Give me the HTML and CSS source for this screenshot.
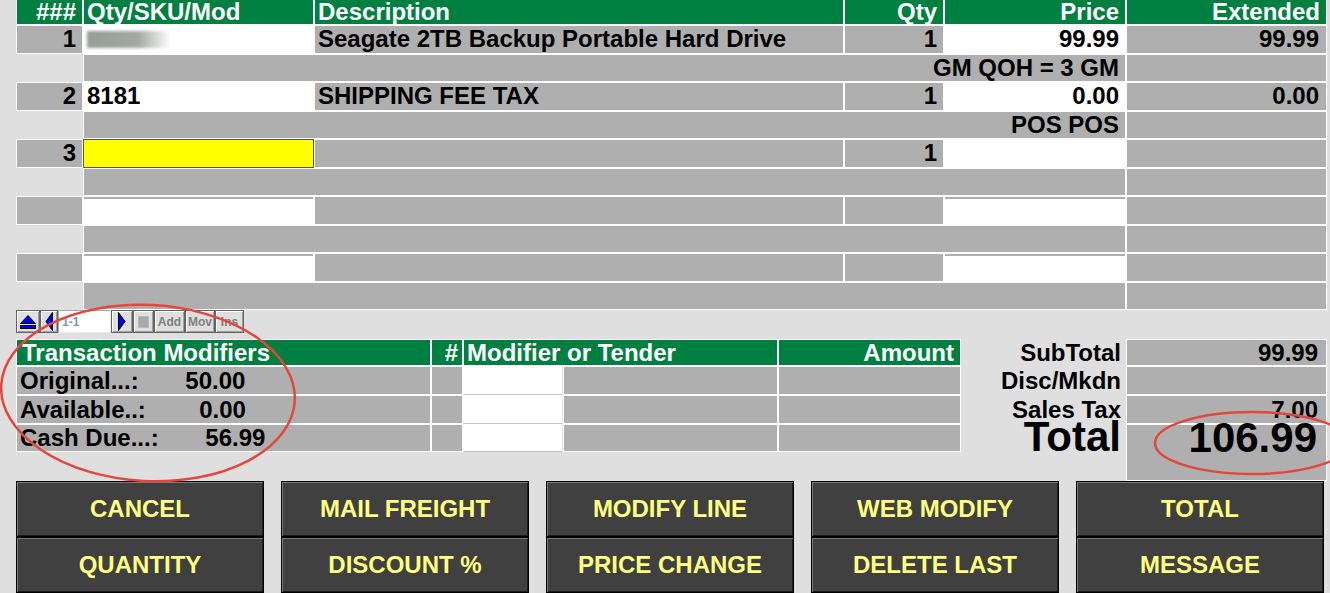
FILE: index.html
```html
<!DOCTYPE html>
<html>
<head>
<meta charset="utf-8">
<title>POS Entry</title>
<link rel="stylesheet" href="styles.css">
</head>
<body>
<div class="screen">
  <div class="lines">
    <div class="c hd r">###</div>
    <div class="c hd">Qty/SKU/Mod</div>
    <div class="c hd">Description</div>
    <div class="c hd r">Qty</div>
    <div class="c hd r">Price</div>
    <div class="c hd r">Extended</div>

    <div class="c r">1</div>
    <div class="c w"><span class="blur"></span></div>
    <div class="c">Seagate 2TB Backup Portable Hard Drive</div>
    <div class="c r">1</div>
    <div class="c w r">99.99</div>
    <div class="c r ext">99.99</div>

    <div class="blank"></div>
    <div class="c r span4">GM QOH = 3 GM</div>
    <div class="c"></div>

    <div class="c r">2</div>
    <div class="c w">8181</div>
    <div class="c">SHIPPING FEE TAX</div>
    <div class="c r">1</div>
    <div class="c w r">0.00</div>
    <div class="c r ext">0.00</div>

    <div class="blank"></div>
    <div class="c r span4">POS POS</div>
    <div class="c"></div>

    <div class="c r">3</div>
    <div class="c y"></div>
    <div class="c"></div>
    <div class="c r">1</div>
    <div class="c w"></div>
    <div class="c"></div>

    <div class="blank"></div>
    <div class="c span4"></div>
    <div class="c"></div>

    <div class="c"></div>
    <div class="c w wt"></div>
    <div class="c"></div>
    <div class="c"></div>
    <div class="c w wt"></div>
    <div class="c"></div>

    <div class="blank"></div>
    <div class="c span4"></div>
    <div class="c"></div>

    <div class="c"></div>
    <div class="c w wt"></div>
    <div class="c"></div>
    <div class="c"></div>
    <div class="c w wt"></div>
    <div class="c"></div>

    <div class="blank"></div>
    <div class="c span4"></div>
    <div class="c"></div>
  </div>

  <div class="toolbar">
    <div class="tb tb-eject">
      <svg width="18" height="16" viewBox="0 0 18 16"><polygon points="1.5,9.5 9,1.5 16.5,9.5" fill="#0000ff" stroke="#000" stroke-width="1"/><rect x="1.5" y="11.5" width="15" height="3" fill="#0000ff" stroke="#000" stroke-width="1"/></svg>
    </div>
    <div class="tb tb-left">
      <svg width="8" height="19" viewBox="0 0 8 19"><polygon points="7.5,0.5 1,9.5 7.5,18.5" fill="#0000ff" stroke="#000" stroke-width="1"/></svg>
    </div>
    <div class="tb-input">1-1</div>
    <div class="tb tb-right">
      <svg width="8" height="19" viewBox="0 0 8 19"><polygon points="0.5,0.5 7,9.5 0.5,18.5" fill="#0000ff" stroke="#000" stroke-width="1"/></svg>
    </div>
    <div class="tb tb-stop"><span class="stop"></span></div>
    <div class="tb tb-add">Add</div>
    <div class="tb tb-mov">Mov</div>
    <div class="tb tb-ins">Ins</div>
  </div>

  <div class="lower">
    <div class="tm">
      <div class="c hd tmh">Transaction Modifiers</div>
      <div class="c hd r hash">#</div>
      <div class="c hd span2">Modifier or Tender</div>
      <div class="c hd r amt">Amount</div>

      <div class="c pre">Original...:       50.00</div>
      <div class="c"></div>
      <div class="c w wb"></div>
      <div class="c"></div>
      <div class="c"></div>

      <div class="c pre">Available..:        0.00</div>
      <div class="c"></div>
      <div class="c w wb"></div>
      <div class="c"></div>
      <div class="c"></div>

      <div class="c pre">Cash Due...:       56.99</div>
      <div class="c"></div>
      <div class="c w wb"></div>
      <div class="c"></div>
      <div class="c"></div>
    </div>

    <div class="sum">
      <div class="sl">SubTotal</div>
      <div class="c r sv">99.99</div>
      <div class="sl">Disc/Mkdn</div>
      <div class="c r sv"></div>
      <div class="sl">Sales Tax</div>
      <div class="c r sv">7.00</div>
      <div class="sl big"><span>Total</span></div>
      <div class="c r sv big"><span>106.99</span></div>
    </div>
  </div>

  <div class="buttons">
    <div class="btn">CANCEL</div>
    <div class="btn">MAIL FREIGHT</div>
    <div class="btn">MODIFY LINE</div>
    <div class="btn">WEB MODIFY</div>
    <div class="btn">TOTAL</div>
    <div class="btn">QUANTITY</div>
    <div class="btn">DISCOUNT %</div>
    <div class="btn">PRICE CHANGE</div>
    <div class="btn">DELETE LAST</div>
    <div class="btn">MESSAGE</div>
  </div>

  <svg class="marks" width="1330" height="593" viewBox="0 0 1330 593">
    <ellipse cx="148" cy="393" rx="147" ry="88" transform="rotate(3 148 393)" fill="none" stroke="#e4463d" stroke-width="2.5"/>
    <ellipse cx="1252" cy="443" rx="97" ry="31" fill="none" stroke="#e4463d" stroke-width="2.5"/>
  </svg>
</div>
</body>
</html>
```

FILE: styles.css
```css
* { box-sizing: border-box; }
html, body { margin: 0; padding: 0; }
body {
  background: #dfdfdf;
  font-family: "Liberation Sans", Arial, sans-serif;
  font-weight: bold;
  font-size: 24px;
  color: #000;
}
.screen {
  position: relative;
  width: 1330px;
  height: 593px;
  overflow: hidden;
  display: flex;
  flex-direction: column;
}

/* line item grid */
.lines {
  display: grid;
  grid-template-columns: 67px 231px 530px 100px 182px 201px;
  grid-template-rows: 25px repeat(10, 28.5px);
  margin-left: 16px;
}
.c {
  border: 1px solid #fff;
  background: #afafaf;
  display: flex;
  align-items: center;
  padding: 0 3px;
  white-space: nowrap;
  overflow: hidden;
  line-height: 1;
}
.hd { background: #008040; color: #fff; overflow: visible; line-height: 22px; }
.lines .hd { border-top: 0; }
.r { justify-content: flex-end; padding-right: 6px; }
.ext { padding-right: 7px; }
.w { background: #fff; }
.wt { box-shadow: inset 0 2px 0 #afafaf; }
.wb { border-bottom-color: #c4c4c4; border-right-color: #e6e6e6; }
.y { background: #ffff00; border-color: #555; }
.blank { background: none; }
.span4 { grid-column: span 4; }
.span2 { grid-column: span 2; }
.blur {
  display: inline-block;
  width: 84px;
  height: 17px;
  background: linear-gradient(90deg, #979d97 0%, #a2a7a2 60%, #ffffff 100%);
  filter: blur(1.5px);
}

/* toolbar */
.toolbar {
  display: flex;
  height: 23px;
  margin-left: 16px;
}
.tb {
  border: 1px solid #646464;
  background: #dfdfdf;
  box-shadow: inset 1px 1px 0 #fff, inset -1px -1px 0 #a0a0a0;
  display: flex;
  align-items: center;
  justify-content: center;
  font-size: 12px;
  color: #808080;
}
.tb-eject { width: 24px; }
.tb-left { width: 18px; }
.tb-input {
  width: 53px;
  background: #fff;
  border: 1px solid #a8a8a8;
  border-right-color: #e8e8e8;
  border-bottom-color: #e8e8e8;
  font-size: 12px;
  font-weight: bold;
  color: #8190b4;
  padding-left: 3px;
  display: flex;
  align-items: center;
}
.tb-right { width: 22px; }
.tb-stop { width: 21px; }
.stop {
  display: block;
  width: 11px;
  height: 12px;
  background: #a9a9a9;
  border: 1px solid #b8b8b8;
}
.tb-add { width: 31px; }
.tb-mov { width: 30px; }
.tb-ins { width: 29px; }

/* lower section */
.lower {
  display: flex;
  margin-top: 6px;
  height: 142px;
}
.tm {
  display: grid;
  grid-template-columns: 415px 32px 100px 215px 183px;
  grid-template-rows: 27px 29px 29px 28px;
  margin-left: 16px;
  align-self: flex-start;
}
.tmh { padding-left: 5px; }
.hash { padding-right: 4px; }
.amt { padding-right: 6px; }
.pre { white-space: pre; }

.sum {
  display: grid;
  grid-template-columns: 1fr 201px;
  grid-template-rows: 27px 29px 29px 57px;
  width: 366px;
  margin-left: auto;
  margin-right: 3px;
}
.sl {
  display: flex;
  align-items: center;
  justify-content: flex-end;
  padding-right: 5px;
  line-height: 1;
  white-space: nowrap;
}
.sv { padding-right: 8px; }
.big {
  font-size: 42px;
  line-height: 42px;
  align-items: flex-start;
  overflow: visible;
}
.big span { margin-top: -8px; }
.sv.big { padding-right: 9px; }

/* function buttons */
.buttons {
  display: grid;
  grid-template-columns: repeat(5, 248px);
  grid-template-rows: 56px 56px;
  column-gap: 17px;
  margin-left: 16px;
}
.btn {
  background: #404040;
  border: 1px solid #000;
  box-shadow: inset 1px 1px 0 #7a7a7a, inset -1px -1px 0 #1c1c1c;
  color: #ffff80;
  display: flex;
  align-items: center;
  justify-content: center;
  font-size: 24px;
  line-height: 1;
}

/* annotation overlay */
.marks {
  position: absolute;
  left: 0;
  top: 0;
  pointer-events: none;
}
```
